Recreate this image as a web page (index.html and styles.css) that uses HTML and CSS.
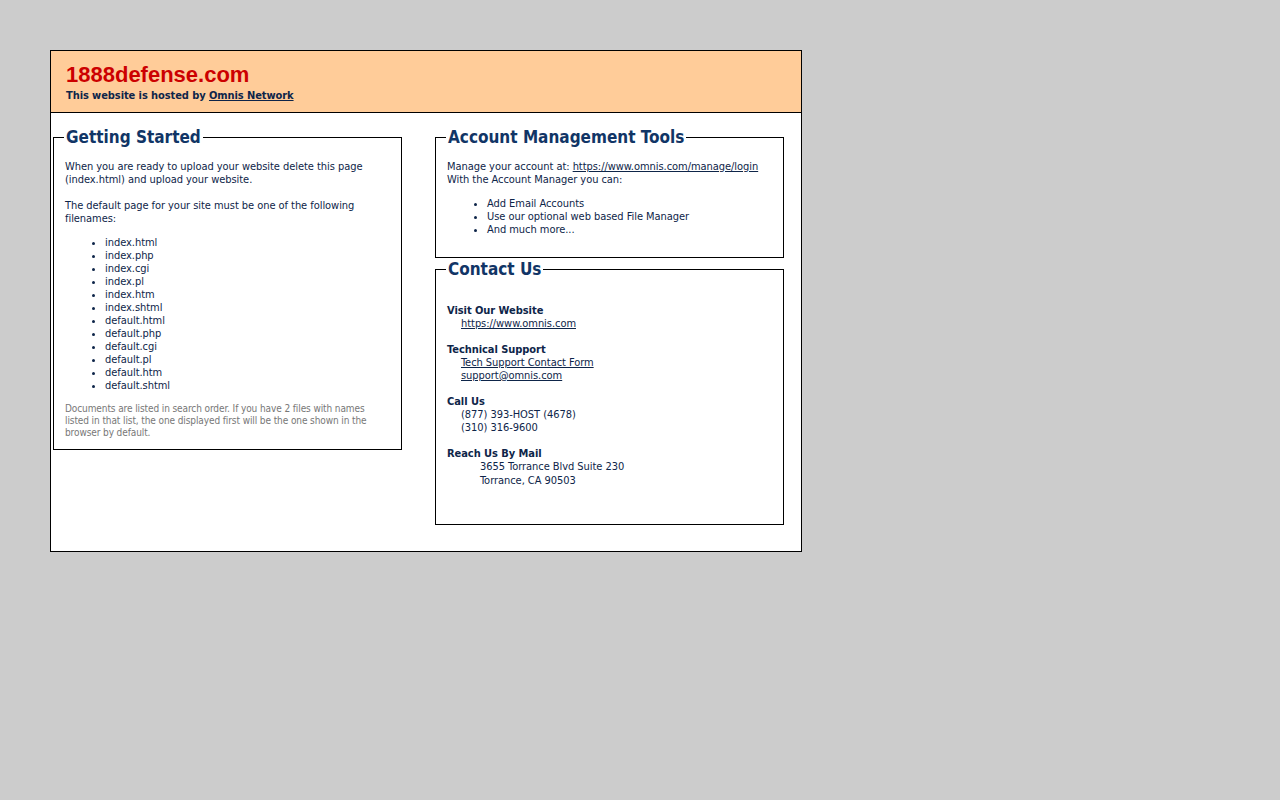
FILE: index.html
```html
<!DOCTYPE html>
<html>
<head>
<meta charset="utf-8">
<title>1888defense.com</title>
<link rel="stylesheet" href="styles.css">
</head>
<body>
<div class="wrap">
  <div class="header">
    <div class="title">1888defense.com</div>
    <div class="hosted">This website is hosted by <a href="#">Omnis Network</a></div>
  </div>
  <div class="content">
    <div class="col">
      <fieldset class="box box-start">
        <legend>Getting Started</legend>
        <p class="p1">When you are ready to upload your website delete this page (index.html) and upload your website.</p>
        <p class="p2">The default page for your site must be one of the following filenames:</p>
        <ul>
          <li>index.html</li>
          <li>index.php</li>
          <li>index.cgi</li>
          <li>index.pl</li>
          <li>index.htm</li>
          <li>index.shtml</li>
          <li>default.html</li>
          <li>default.php</li>
          <li>default.cgi</li>
          <li>default.pl</li>
          <li>default.htm</li>
          <li>default.shtml</li>
        </ul>
        <p class="note">Documents are listed in search order. If you have 2 files with names listed in that list, the one displayed first will be the one shown in the browser by default.</p>
      </fieldset>
    </div>
    <div class="col">
      <fieldset class="box box-account">
        <legend>Account Management Tools</legend>
        <p class="p0">Manage your account at: <a href="#">https://www.omnis.com/manage/login</a><br>With the Account Manager you can:</p>
        <ul>
          <li>Add Email Accounts</li>
          <li>Use our optional web based File Manager</li>
          <li>And much more...</li>
        </ul>
      </fieldset>
      <fieldset class="box box-contact">
        <legend>Contact Us</legend>
        <div class="group first">
          <div class="ghead">Visit Our Website</div>
          <div class="item"><a href="#">https://www.omnis.com</a></div>
        </div>
        <div class="group">
          <div class="ghead">Technical Support</div>
          <div class="item"><a href="#">Tech Support Contact Form</a></div>
          <div class="item"><a href="#">support@omnis.com</a></div>
        </div>
        <div class="group">
          <div class="ghead">Call Us</div>
          <div class="item">(877) 393-HOST (4678)</div>
          <div class="item">(310) 316-9600</div>
        </div>
        <div class="group">
          <div class="ghead">Reach Us By Mail</div>
          <div class="addr">3655 Torrance Blvd Suite 230</div>
          <div class="addr addr2">Torrance, CA 90503</div>
        </div>
      </fieldset>
    </div>
  </div>
</div>
</body>
</html>
```

FILE: styles.css
```css
html, body {
  margin: 0;
  padding: 0;
}
body {
  background: #cccccc;
  padding: 50px;
  font-family: "DejaVu Sans Condensed", "DejaVu Sans", "Liberation Sans", sans-serif;
  font-stretch: condensed;
  font-size: 11px;
  line-height: 13px;
  color: #0e2549;
  letter-spacing: -0.05px;
}
a {
  color: #0e2549;
  text-decoration: underline;
}
.wrap {
  width: 750px;
  height: 500px;
  border: 1px solid #000;
  background: #fff;
}
.header {
  background: #ffcc99;
  border-bottom: 1px solid #000;
  height: 62px;
  box-sizing: border-box;
  padding: 12px 15px 0 15px;
}
.title {
  font-family: "Liberation Sans", Arial, sans-serif;
  font-stretch: normal;
  font-weight: bold;
  font-size: 22px;
  line-height: 24px;
  letter-spacing: 0;
  color: #cc0000;
}
.hosted {
  font-weight: bold;
  line-height: 13px;
  margin-top: 2px;
  letter-spacing: -0.08px;
}
.hosted a {
  font-weight: bold;
}
.content {
  display: grid;
  grid-template-columns: 349px 349px;
  column-gap: 33px;
  padding: 14px 17px 0 2px;
  align-items: start;
}
.col {
  display: flex;
  flex-direction: column;
}
.box {
  margin: 0;
  border: 1px solid #000;
  padding: 13px 11px 11px 11px;
  min-width: 0;
}
.box legend {
  padding: 0 2px;
  margin-left: -1px;
  font-family: "DejaVu Sans Condensed", "DejaVu Sans", sans-serif;
  font-stretch: condensed;
  font-weight: bold;
  font-size: 17px;
  line-height: 20px;
  letter-spacing: 0;
  color: #113566;
}
p {
  margin: 0;
}
.p1 {
  margin-bottom: 13px;
}
.p2 {
  margin-bottom: 11px;
}
ul {
  margin: 0 0 11px 0;
  padding-left: 40px;
}
.note {
  font-size: 10px;
  line-height: 12px;
  letter-spacing: -0.1px;
  color: #777777;
}
.box-start {
  padding-bottom: 10px;
}
.box-account {
  padding-bottom: 10px;
}
.p0 {
  margin-bottom: 11px;
}
.box-contact {
  margin-top: 1px;
  padding-bottom: 37px;
}
.group {
  margin-top: 13px;
}
.group.first {
  margin-top: 12px;
}
.ghead {
  font-weight: bold;
}
.item {
  padding-left: 14px;
}
.addr {
  padding-left: 33px;
}
.addr2 {
  margin-top: 1px;
}
```
